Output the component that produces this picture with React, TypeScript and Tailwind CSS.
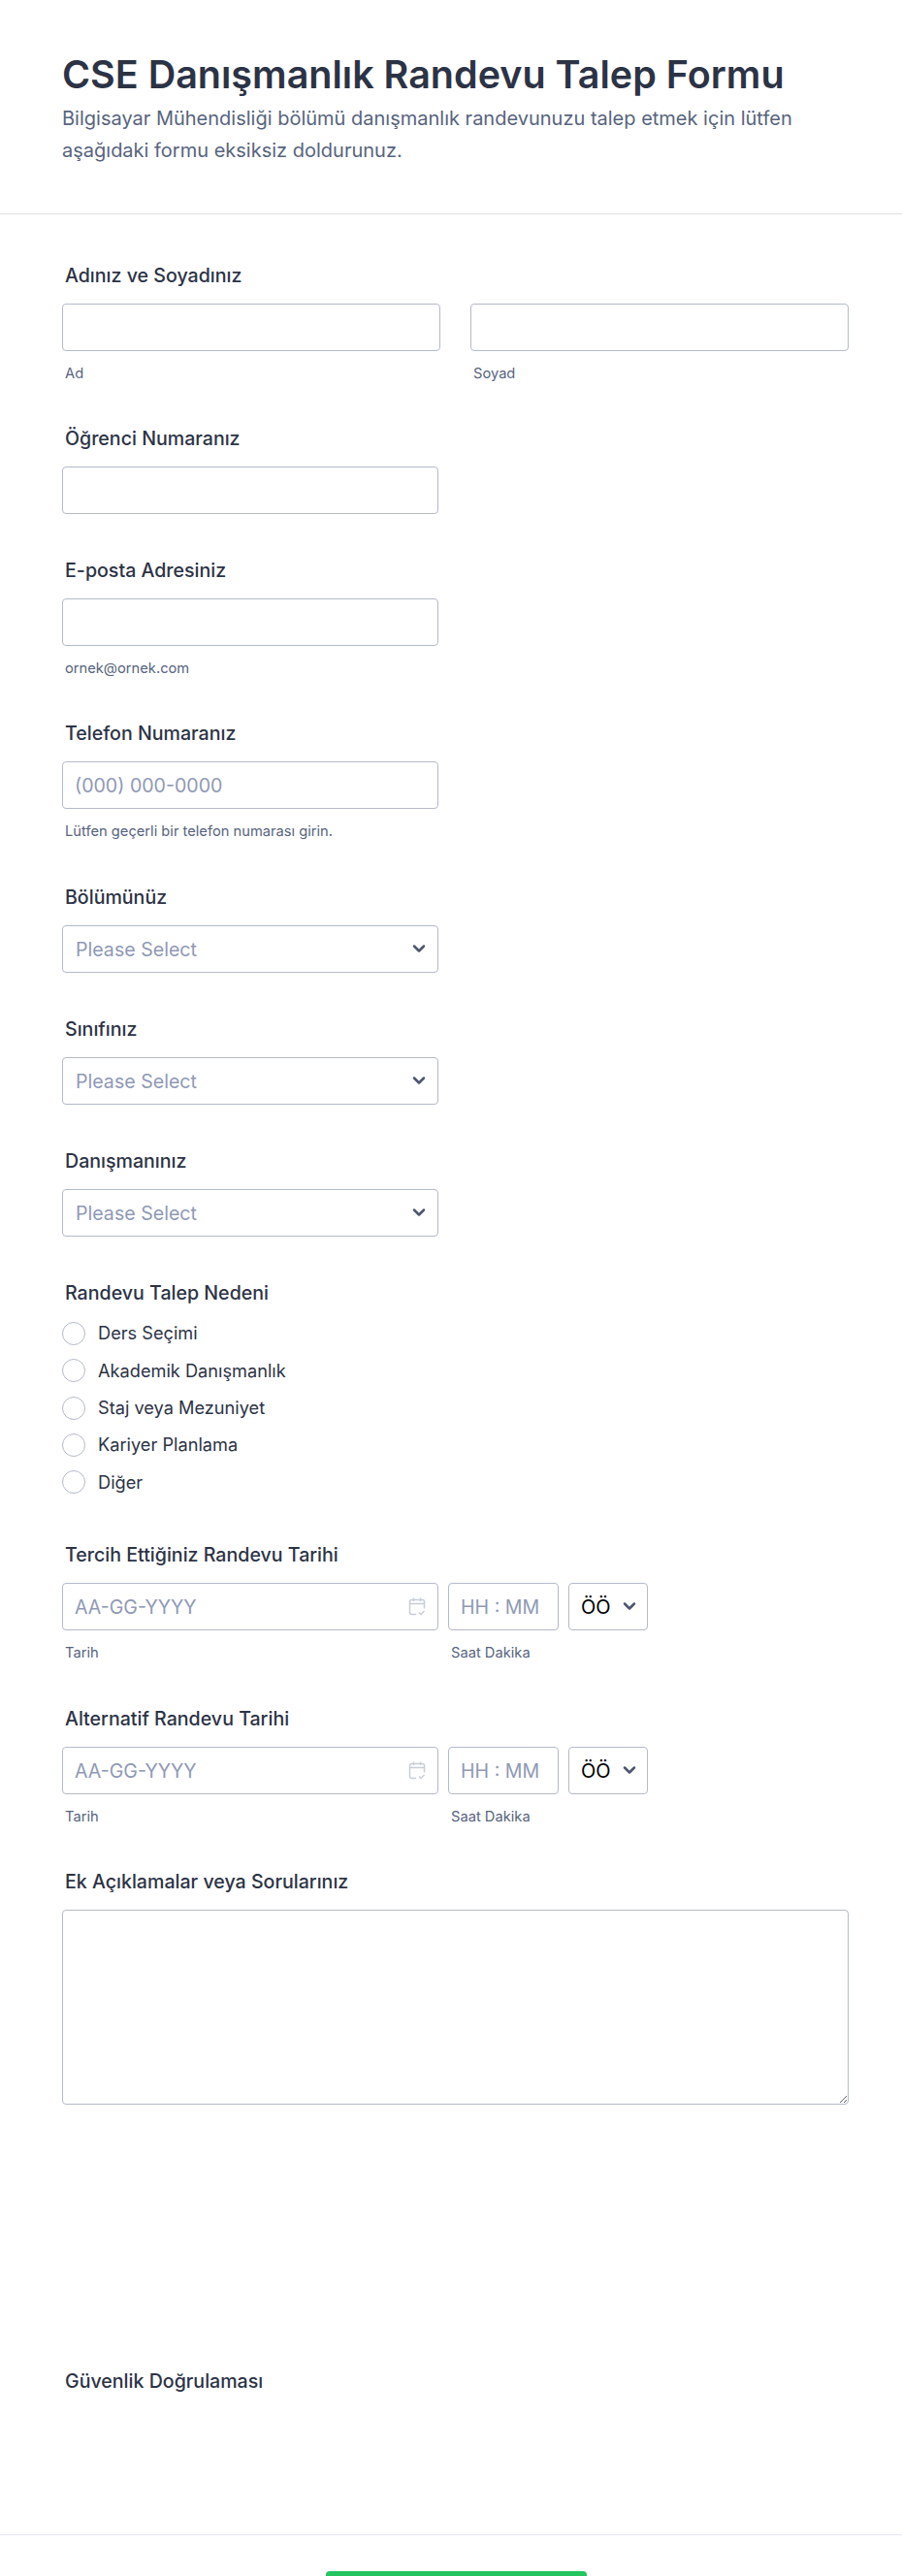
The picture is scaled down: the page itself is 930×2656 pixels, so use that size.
import { ChevronDown } from "lucide-react";
import type { ReactNode } from "react";

const inputClass =
  "h-[49px] w-full rounded-[4px] border border-[#b4bac9] bg-white px-3 text-[19.6px] text-[#2c3345] outline-none placeholder:text-[#8f99b5]";

function Label({ children }: { children: ReactNode }) {
  return <div className="mb-[16px] h-[26px] pl-[3px] text-[19.6px] leading-[26px] font-medium text-[#2c3345]">{children}</div>;
}

function Sub({ children }: { children: ReactNode }) {
  return <div className="mt-[15px] h-[17px] pl-[3px] text-[14.7px] leading-[17px] text-[#57647e]">{children}</div>;
}

function SelectField({ label, className }: { label: string; className: string }) {
  return (
    <div className={className}>
      <Label>{label}</Label>
      <div className="relative w-[388px]">
        <select className={`${inputClass} appearance-none pt-[2px] pl-[13px] text-[#8f99b5]`} defaultValue="">
          <option value="">Please Select</option>
        </select>
        <ChevronDown className="pointer-events-none absolute top-[14px] right-[10px] h-5 w-5 text-[#4c5570]" strokeWidth={3} />
      </div>
    </div>
  );
}

function CalendarIcon() {
  return (
    <svg className="pointer-events-none absolute top-[15px] right-[13px]" width="18" height="19" viewBox="0 0 18 19" fill="none" stroke="#c8cdd8" strokeWidth="1.5">
      <path d="M8 17.5H3.5a2 2 0 0 1-2-2v-11a2 2 0 0 1 2-2h11a2 2 0 0 1 2 2v7" />
      <path d="M1.5 6.5h15M5.5 0.5v3.5M12.5 0.5v3.5" />
      <path d="M11 15.5l2 2 3.5-3.5" />
    </svg>
  );
}

function DateField({ label, className }: { label: string; className: string }) {
  return (
    <div className={className}>
      <Label>{label}</Label>
      <div className="flex">
        <div className="w-[388px]">
          <div className="relative">
            <input className={inputClass} placeholder="AA-GG-YYYY" />
            <CalendarIcon />
          </div>
          <Sub>Tarih</Sub>
        </div>
        <div className="ml-[10px] w-[114px]">
          <input className={inputClass} placeholder="HH : MM" />
          <Sub>Saat Dakika</Sub>
        </div>
        <div className="relative ml-[10px] h-[49px] w-[82px]">
          <select className="h-[49px] w-full appearance-none rounded-[4px] border border-[#b4bac9] bg-white px-3 text-[20px] text-black outline-none" defaultValue="ÖÖ">
            <option>ÖÖ</option>
            <option>ÖS</option>
          </select>
          <ChevronDown className="pointer-events-none absolute top-[14px] right-[9px] h-5 w-5 text-[#4c5570]" strokeWidth={3} />
        </div>
      </div>
    </div>
  );
}

const reasons = ["Ders Seçimi", "Akademik Danışmanlık", "Staj veya Mezuniyet", "Kariyer Planlama", "Diğer"];

export default function App() {
  return (
    <div className="h-[2656px] overflow-hidden bg-white font-['Inter',sans-serif]">
      <header className="h-[221px] border-b border-[#dfe1e8] px-16 pt-[51px]">
        <h1 className="text-[39.5px] leading-[52px] font-semibold text-[#2c3345]">CSE Danışmanlık Randevu Talep Formu</h1>
        <p className="mt-[3px] w-[790px] text-[20px] leading-[32.6px] text-[#57647e]">
          Bilgisayar Mühendisliği bölümü danışmanlık randevunuzu talep etmek için lütfen aşağıdaki formu eksiksiz doldurunuz.
        </p>
      </header>

      <main className="pl-16">
        <div className="w-[811px] pt-[50px]">
          <Label>Adınız ve Soyadınız</Label>
          <div className="grid grid-cols-2 gap-[31px]">
            <div>
              <input className={inputClass} />
              <Sub>Ad</Sub>
            </div>
            <div>
              <input className={inputClass} />
              <Sub>Soyad</Sub>
            </div>
          </div>
        </div>

        <div className="mt-[45px] w-[388px]">
          <Label>Öğrenci Numaranız</Label>
          <input className={inputClass} />
        </div>

        <div className="mt-[45px] w-[388px]">
          <Label>E-posta Adresiniz</Label>
          <input className={inputClass} />
          <Sub>ornek@ornek.com</Sub>
        </div>

        <div className="mt-[45px] w-[388px]">
          <Label>Telefon Numaranız</Label>
          <input className={inputClass} placeholder="(000) 000-0000" />
          <Sub>Lütfen geçerli bir telefon numarası girin.</Sub>
        </div>

        <SelectField label="Bölümünüz" className="mt-[46px] w-[388px]" />
        <SelectField label="Sınıfınız" className="mt-[45px] w-[388px]" />
        <SelectField label="Danışmanınız" className="mt-[45px] w-[388px]" />

        <div className="mt-[45px]">
          <Label>Randevu Talep Nedeni</Label>
          <div className="flex flex-col gap-[14.3px] pt-[1px]">
            {reasons.map((r) => (
              <label key={r} className="flex h-[24px] items-center gap-[13px] text-[18.2px] text-[#2c3345]">
                <span className="h-[24px] w-[24px] rounded-full border border-[#b4bac9] bg-white" />
                {r}
              </label>
            ))}
          </div>
        </div>

        <DateField label="Tercih Ettiğiniz Randevu Tarihi" className="mt-[50px]" />
        <DateField label="Alternatif Randevu Tarihi" className="mt-[46px]" />

        <div className="mt-[45px] w-[811px]">
          <Label>Ek Açıklamalar veya Sorularınız</Label>
          <textarea className="block h-[201px] w-full rounded-[4px] border border-[#b4bac9] bg-white px-3 py-2 text-[18px] outline-none" />
        </div>

        <div className="mt-[272px]">
          <Label>Güvenlik Doğrulaması</Label>
        </div>
      </main>

      <footer className="mt-[145px] flex justify-center border-t border-[#e6e6f0] pt-[37px] pl-[11px]">
        <button className="h-[49px] w-[269px] rounded-[4px] bg-[#22c55e]" />
      </footer>
    </div>
  );
}
